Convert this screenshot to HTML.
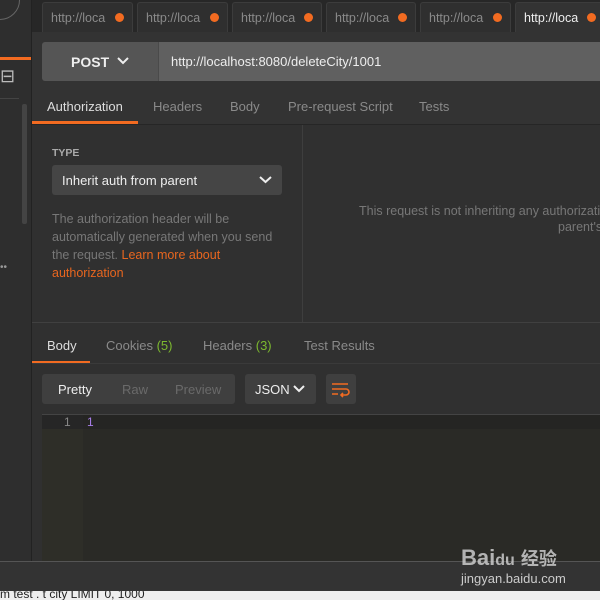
<!DOCTYPE html>
<html><head><style>
*{margin:0;padding:0;box-sizing:border-box}
body{width:600px;height:600px;overflow:hidden;background:#303030;font-family:"Liberation Sans",sans-serif;position:relative;font-size:13px}
.a{position:absolute}
.tab{position:absolute;top:2px;height:30px;background:#2f2f2f;border:1px solid #3c3c3c;border-bottom:none;border-radius:3px 3px 0 0;color:#8a8a8a;font-size:12.5px;padding:8px 0 0 8px}
.tab i{position:absolute;right:8px;top:10px;width:9px;height:9px;border-radius:50%;background:#f26b21}
.t{position:absolute;color:#8a8a8a;font-size:13px}
.chev{position:absolute}
</style></head><body>
<div class="a" style="left:0;top:0;width:32px;height:561px;background:#2e2e2e;border-right:1px solid #222"></div>
<div class="a" style="left:-20px;top:-20px;width:40px;height:40px;border:1px solid #666;border-radius:50%"></div>
<div class="a" style="left:0;top:57px;width:31px;height:3px;background:#f26b21"></div>
<div class="a" style="left:0;top:66px;color:#bbb;font-size:18px">⊟</div>
<div class="a" style="left:0;top:98px;width:19px;height:1px;background:#444"></div>
<div class="a" style="left:22px;top:104px;width:5px;height:120px;background:#444;border-radius:2px"></div>
<div class="a" style="left:0;top:262px;color:#999;font-size:10px">••</div>
<div class="a" style="left:32px;top:0;width:568px;height:32px;background:#272727"></div>
<div class="tab" style="left:42px;width:91px">http://loca<i></i></div>
<div class="tab" style="left:137px;width:91px">http://loca<i></i></div>
<div class="tab" style="left:232px;width:90px">http://loca<i></i></div>
<div class="tab" style="left:326px;width:90px">http://loca<i></i></div>
<div class="tab" style="left:420px;width:91px">http://loca<i></i></div>
<div class="tab" style="left:515px;width:90px;background:#333;color:#eee">http://loca<i></i></div>
<div class="a" style="left:32px;top:32px;width:568px;height:92px;background:#333"></div>
<div class="a" style="left:42px;top:42px;width:116px;height:39px;background:#555;border-radius:3px 0 0 3px;color:#eee;font-weight:bold;font-size:14px;padding:12px 0 0 29px">POST</div>
<svg class="chev" style="left:117px;top:57px" width="12" height="8"><path d="M1 1l5 5 5-5" stroke="#eee" stroke-width="2" fill="none"/></svg>
<div class="a" style="left:158px;top:42px;width:442px;height:39px;background:#606060;border-left:1px solid #4a4a4a;color:#eee;font-size:13px;padding:12px 0 0 12px">http://localhost:8080/deleteCity/1001</div>
<div class="t" style="left:47px;top:99px;color:#ddd">Authorization</div>
<div class="t" style="left:153px;top:99px">Headers</div>
<div class="t" style="left:230px;top:99px">Body</div>
<div class="t" style="left:288px;top:99px">Pre-request Script</div>
<div class="t" style="left:419px;top:99px">Tests</div>
<div class="a" style="left:32px;top:121px;width:106px;height:3px;background:#f26b21"></div>
<div class="a" style="left:32px;top:124px;width:568px;height:1px;background:#262626"></div>
<div class="a" style="left:32px;top:125px;width:568px;height:197px;background:#303030"></div>
<div class="a" style="left:302px;top:125px;width:1px;height:197px;background:#3e3e3e"></div>
<div class="t" style="left:52px;top:147px;font-size:10.5px;font-weight:bold;color:#aaa">TYPE</div>
<div class="a" style="left:52px;top:165px;width:230px;height:30px;background:#454545;border-radius:3px;color:#eee;font-size:13px;padding:8px 0 0 10px">Inherit auth from parent</div>
<svg class="chev" style="left:259px;top:176px" width="13" height="8"><path d="M1 1l5.5 5 5.5-5" stroke="#eee" stroke-width="2" fill="none"/></svg>
<div class="t" style="left:52px;top:210px;font-size:12.5px;line-height:18px;color:#777;width:240px">The authorization header will be automatically generated when you send the request. <span style="color:#e8661f">Learn more about authorization</span></div>
<div class="t" style="left:359px;top:202px;font-size:12.5px;line-height:18px;color:#777;white-space:nowrap">This request is not inheriting any authorizati</div>
<div class="t" style="left:558px;top:220px;font-size:12.5px;color:#777">parent's</div>
<div class="a" style="left:32px;top:322px;width:568px;height:1px;background:#404040"></div>
<div class="t" style="left:47px;top:338px;color:#ddd">Body</div>
<div class="t" style="left:106px;top:338px">Cookies <span style="color:#7cb82f">(5)</span></div>
<div class="t" style="left:203px;top:338px">Headers <span style="color:#7cb82f">(3)</span></div>
<div class="t" style="left:304px;top:338px">Test Results</div>
<div class="a" style="left:32px;top:361px;width:58px;height:3px;background:#f26b21"></div>
<div class="a" style="left:32px;top:363px;width:568px;height:1px;background:#3a3a3a"></div>
<div class="a" style="left:42px;top:374px;width:193px;height:30px;background:#3f3f3f;border-radius:3px"></div>
<div class="t" style="left:58px;top:382px;color:#eee">Pretty</div>
<div class="t" style="left:122px;top:382px;color:#6a6a6a">Raw</div>
<div class="t" style="left:175px;top:382px;color:#6a6a6a">Preview</div>
<div class="a" style="left:245px;top:374px;width:71px;height:30px;background:#3f3f3f;border-radius:3px;color:#eee;padding:8px 0 0 10px">JSON</div>
<svg class="chev" style="left:293px;top:385px" width="12" height="8"><path d="M1 1l5 5 5-5" stroke="#eee" stroke-width="2" fill="none"/></svg>
<div class="a" style="left:326px;top:374px;width:30px;height:30px;background:#3f3f3f;border-radius:3px"></div>
<svg class="a" style="left:326px;top:374px" width="30" height="30"><path d="M6 10h16M6 15h14a3 3 0 0 1 0 6h-4M6 20h6M17 19l-2 2 2 2" stroke="#f26b21" stroke-width="1.6" fill="none"/></svg>
<div class="a" style="left:42px;top:414px;width:558px;height:147px;background:#2a2a26;border-top:1px solid #444"></div>
<div class="a" style="left:42px;top:415px;width:41px;height:146px;background:#2e2e28"></div>
<div class="a" style="left:42px;top:415px;width:41px;height:14px;background:#262626"></div>
<div class="a" style="left:83px;top:415px;width:517px;height:14px;background:#252523"></div>
<div class="t" style="left:64px;top:415px;font-size:12px;color:#888">1</div>
<div class="t" style="left:87px;top:415px;font-size:12px;color:#a87ee8">1</div>
<div class="a" style="left:0;top:561px;width:600px;height:30px;background:#333;border-top:1px solid #555"></div>
<div class="a" style="left:0;top:591px;width:600px;height:9px;background:#eee;overflow:hidden"><div style="font-size:12px;color:#222;margin-top:-4px">m  test . t city  LIMIT 0, 1000</div></div>
<div class="a" style="left:461px;top:545px;color:#ccc;font-size:22px;font-weight:bold;opacity:.85">Bai<span style="font-size:16px">du</span> <span style="font-family:'Noto Sans CJK SC',sans-serif;font-size:18px">经验</span></div>
<div class="a" style="left:461px;top:571px;color:#ccc;font-size:13px">jingyan.baidu.com</div>
</body></html>
